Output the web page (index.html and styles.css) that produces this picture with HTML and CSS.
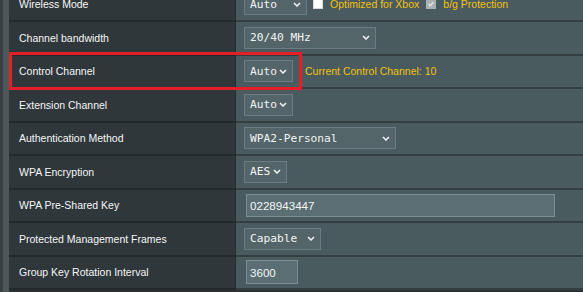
FILE: index.html
```html
<!doctype html>
<html>

<head>
    <title>Wireless - General</title>
    <link rel="stylesheet" href="styles.css">
</head>

<body>
    <div class="page">
        <div class="rail"></div>
        <div class="settings">
            <div class="row">
                <div class="label">Wireless Mode</div>
                <div class="value">
                    <span class="select sel-mode">Auto
                        <svg class="chev" viewBox="0 0 8 5"><path d="M1 1l3 3 3-3"/></svg>
                    </span>
                    <span class="check"><span class="box"></span>Optimized for Xbox</span>
                    <span class="check"><span class="box checked"><svg viewBox="0 0 10 10"><path d="M2 5.2l2 2 4-4.4"/></svg></span>b/g Protection</span>
                </div>
            </div>
            <div class="row">
                <div class="label">Channel bandwidth</div>
                <div class="value">
                    <span class="select sel-bw">20/40 MHz
                        <svg class="chev" viewBox="0 0 8 5"><path d="M1 1l3 3 3-3"/></svg>
                    </span>
                </div>
            </div>
            <div class="row">
                <div class="label">Control Channel</div>
                <div class="value">
                    <span class="select sel-auto">Auto
                        <svg class="chev" viewBox="0 0 8 5"><path d="M1 1l3 3 3-3"/></svg>
                    </span>
                    <span class="note">Current Control Channel: 10</span>
                </div>
            </div>
            <div class="row">
                <div class="label">Extension Channel</div>
                <div class="value">
                    <span class="select sel-auto">Auto
                        <svg class="chev" viewBox="0 0 8 5"><path d="M1 1l3 3 3-3"/></svg>
                    </span>
                </div>
            </div>
            <div class="row">
                <div class="label">Authentication Method</div>
                <div class="value">
                    <span class="select sel-auth">WPA2-Personal
                        <svg class="chev" viewBox="0 0 8 5"><path d="M1 1l3 3 3-3"/></svg>
                    </span>
                </div>
            </div>
            <div class="row">
                <div class="label">WPA Encryption</div>
                <div class="value">
                    <span class="select sel-aes">AES
                        <svg class="chev" viewBox="0 0 8 5"><path d="M1 1l3 3 3-3"/></svg>
                    </span>
                </div>
            </div>
            <div class="row">
                <div class="label">WPA Pre-Shared Key</div>
                <div class="value">
                    <input class="field field-key" type="text" value="0228943447">
                </div>
            </div>
            <div class="row">
                <div class="label">Protected Management Frames</div>
                <div class="value">
                    <span class="select sel-pmf">Capable
                        <svg class="chev" viewBox="0 0 8 5"><path d="M1 1l3 3 3-3"/></svg>
                    </span>
                </div>
            </div>
            <div class="row">
                <div class="label">Group Key Rotation Interval</div>
                <div class="value">
                    <input class="field field-short" type="text" value="3600">
                </div>
            </div>
        </div>
        <div class="highlight"></div>
    </div>
</body>

</html>
```

FILE: styles.css
```css
body {
    margin: 0;
    background-color: #2b3134;
    font-family: "Liberation Sans", Arial, sans-serif;
    overflow: hidden;
}

.page {
    position: relative;
    display: flex;
    height: 292px;
    border-left: 3px solid #393f42;
}

.rail {
    width: 6px;
    flex: none;
    background-color: #4e575b;
}

.settings {
    flex: 1;
    margin-top: -11.5px;
}

.row {
    display: grid;
    grid-template-columns: 227px 1fr;
    height: 33.5px;
}

.label,
.value {
    display: flex;
    align-items: center;
    box-sizing: border-box;
    border-bottom: 2px solid #22292c;
}

.label {
    padding-left: 10px;
    background-color: #2f373b;
    border-right: 1px solid #252c2f;
    color: #f4f6f6;
    font-size: 10.5px;
}

.value {
    gap: 6px;
    padding-left: 8px;
    background-color: #4a5b60;
    border-bottom-color: #343e41;
}

.select {
    display: flex;
    align-items: center;
    justify-content: space-between;
    box-sizing: border-box;
    height: 22px;
    padding: 0 5px 0 5px;
    background-color: #536569;
    border: 1px solid #6b7d82;
    color: #f2f4f4;
    font-family: "DejaVu Sans Mono", "Liberation Mono", monospace;
    font-size: 11.2px;
}

.chev {
    width: 8px;
    height: 5px;
    flex: none;
}

.chev path {
    fill: none;
    stroke: #f2f4f4;
    stroke-width: 1.5;
}

.sel-mode {
    width: 63px;
}

.sel-bw {
    width: 132px;
}

.sel-auto {
    width: 49px;
}

.sel-auth {
    width: 152px;
}

.sel-aes {
    width: 43px;
}

.sel-pmf {
    width: 77px;
}

.check {
    display: flex;
    align-items: center;
    gap: 7px;
    color: #f3c20f;
    font-size: 10.5px;
}

.check + .check {
    margin-left: 1px;
}

.box {
    width: 10px;
    height: 10px;
    box-sizing: border-box;
    background-color: #ffffff;
    border: 1px solid #d8dcdd;
}

.box.checked {
    background-color: #a9b1b3;
    border-color: #a9b1b3;
}

.box svg {
    display: block;
    width: 8px;
    height: 8px;
}

.box path {
    fill: none;
    stroke: #e4e8e9;
    stroke-width: 1.6;
}

.note {
    margin-left: 6px;
    color: #f3c20f;
    font-size: 10.5px;
}

.field {
    box-sizing: border-box;
    margin-left: 2px;
    padding: 0 3px;
    background-color: #5a6e74;
    border: 1px solid #7b8e92;
    color: #f4f6f6;
    font-family: "Liberation Sans", Arial, sans-serif;
    font-size: 11.6px;
    outline: none;
}

.field-key {
    width: 309px;
    height: 23px;
}

.field-short {
    width: 52px;
    height: 24px;
}

.highlight {
    position: absolute;
    left: 6px;
    top: 52px;
    width: 293px;
    height: 38px;
    box-sizing: border-box;
    border: 3px solid #e3202a;
}
```
